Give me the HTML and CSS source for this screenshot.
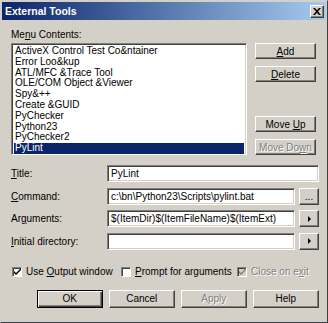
FILE: index.html
```html
<!DOCTYPE html>
<html lang="en">
<head>
    <meta charset="UTF-8">
    <title>External Tools</title>
    <link rel="stylesheet" href="styles.css">
</head>
<body>
    <div class="window">
        <div class="titlebar">
            <span class="title">External Tools</span>
            <span class="close-btn">
                <svg width="8" height="7" viewBox="0 0 8 7"><path d="M0 0h2l2 2.2L6 0h2L5 3.5 8 7H6L4 4.8 2 7H0l3-3.5z" fill="#000"/></svg>
            </span>
        </div>
        <div class="content">
            <div class="label">Me<u>n</u>u Contents:</div>
            <div class="top">
                <ul class="list">
                    <li>ActiveX Control Test Co&amp;ntainer</li>
                    <li>Error Loo&amp;kup</li>
                    <li>ATL/MFC &amp;Trace Tool</li>
                    <li>OLE/COM Object &amp;Viewer</li>
                    <li>Spy&amp;++</li>
                    <li>Create &amp;GUID</li>
                    <li>PyChecker</li>
                    <li>Python23</li>
                    <li>PyChecker2</li>
                    <li class="selected">PyLint</li>
                </ul>
                <div class="side">
                    <div class="group">
                        <button class="btn"><span><u>A</u>dd</span></button>
                        <button class="btn"><span><u>D</u>elete</span></button>
                    </div>
                    <div class="group">
                        <button class="btn"><span>Move <u>U</u>p</span></button>
                        <button class="btn disabled"><span>Move Do<u>w</u>n</span></button>
                    </div>
                </div>
            </div>
            <div class="form">
                <div class="row">
                    <span class="field-label"><u>T</u>itle:</span>
                    <div class="textbox">PyLint</div>
                </div>
                <div class="row">
                    <span class="field-label"><u>C</u>ommand:</span>
                    <div class="textbox">c:\bn\Python23\Scripts\pylint.bat</div>
                    <button class="btn small dots"><span>...</span></button>
                </div>
                <div class="row">
                    <span class="field-label">Ar<u>g</u>uments:</span>
                    <div class="textbox">$(ItemDir)$(ItemFileName)$(ItemExt)</div>
                    <button class="btn small"><span class="arrow"></span></button>
                </div>
                <div class="row">
                    <span class="field-label"><u>I</u>nitial directory:</span>
                    <div class="textbox"></div>
                    <button class="btn small"><span class="arrow"></span></button>
                </div>
            </div>
            <div class="checks">
                <label class="check c1">
                    <span class="box">
                        <svg width="7" height="7" viewBox="0 0 7 7"><path d="M0 3l2 2 5-5v2L2 7 0 5z" fill="#000"/></svg>
                    </span>
                    <span>Use <u>O</u>utput window</span>
                </label>
                <label class="check c2">
                    <span class="box"></span>
                    <span><u>P</u>rompt for arguments</span>
                </label>
                <label class="check c3 disabled">
                    <span class="box">
                        <svg width="7" height="7" viewBox="0 0 7 7"><path d="M0 3l2 2 5-5v2L2 7 0 5z" fill="#808080"/></svg>
                    </span>
                    <span>Close on e<u>x</u>it</span>
                </label>
            </div>
            <div class="buttons">
                <button class="btn wide default"><span>OK</span></button>
                <button class="btn wide"><span>Cancel</span></button>
                <button class="btn wide disabled"><span>Apply</span></button>
                <button class="btn wide"><span>Help</span></button>
            </div>
        </div>
    </div>
</body>
</html>
```
FILE: styles.css
```css
body {
    margin: 0;
    background-color: #d4d0c8;
    font-family: "Liberation Sans", Arial, sans-serif;
    font-size: 10px;
    color: #000;
}
u {
    text-decoration: underline;
    text-underline-offset: 1px;
}
.window {
    width: 328px;
    height: 323px;
    box-sizing: border-box;
    border: 1px solid;
    border-color: #d4d0c8 #404040 #404040 #d4d0c8;
    background-color: #d4d0c8;
}
.titlebar {
    height: 18px;
    margin: 1px 1px 0 1px;
    display: flex;
    align-items: center;
    justify-content: space-between;
    padding: 0 2px 0 3px;
    background: linear-gradient(to right, #0a246a, #a6caf0);
    color: white;
}
.title {
    font-weight: bold;
    font-size: 10.5px;
}
.close-btn {
    width: 14px;
    height: 13px;
    box-sizing: border-box;
    display: flex;
    align-items: center;
    justify-content: center;
    background: #d4d0c8;
    border: 1px solid;
    border-color: #fff #404040 #404040 #fff;
    box-shadow: inset -1px -1px 0 #808080;
}
.content {
    padding: 8px 8px 0 10px;
}
.label {
    height: 13px;
    line-height: 13px;
    margin-bottom: 2px;
}
.top {
    display: flex;
    gap: 8px;
}
.list {
    list-style: none;
    margin: 0;
    width: 236px;
    height: 112px;
    box-sizing: border-box;
    border: 1px solid;
    border-color: #808080 #fff #fff #808080;
    box-shadow: inset 1px 1px 0 #404040, inset -1px -1px 0 #d4d0c8;
    background: white;
    padding: 2px 2px 1px;
}
.list li {
    height: 10.8px;
    line-height: 10.8px;
    padding-left: 1px;
    white-space: nowrap;
}
.list li.selected {
    background: #0a246a;
    color: white;
}
.side {
    width: 61px;
    display: flex;
    flex-direction: column;
    justify-content: space-between;
}
.group {
    display: flex;
    flex-direction: column;
    gap: 7px;
}
.btn {
    height: 16px;
    box-sizing: border-box;
    padding: 0;
    margin: 0;
    font: inherit;
    color: #000;
    background: #d4d0c8;
    border: 1px solid;
    border-color: #fff #404040 #404040 #fff;
    box-shadow: inset -1px -1px 0 #808080;
    display: flex;
    align-items: center;
    justify-content: center;
    white-space: nowrap;
}
.btn.disabled {
    color: #808080;
    text-shadow: 1px 1px 0 #fff;
}
.form {
    margin-top: 10px;
    display: flex;
    flex-direction: column;
    gap: 5.6px;
}
.row {
    display: flex;
    align-items: center;
    height: 17px;
    gap: 4px;
}
.field-label {
    width: 92px;
}
.textbox {
    flex: 1;
    height: 17px;
    box-sizing: border-box;
    border: 1px solid;
    border-color: #808080 #fff #fff #808080;
    box-shadow: inset 1px 1px 0 #404040, inset -1px -1px 0 #d4d0c8;
    background: white;
    padding: 0 3px;
    line-height: 15px;
    white-space: nowrap;
    overflow: hidden;
}
.btn.small {
    width: 20px;
    height: 17px;
}
.dots {
    align-items: flex-end;
    padding-bottom: 3px;
    line-height: 8px;
}
.arrow {
    width: 0;
    height: 0;
    border-top: 3px solid transparent;
    border-bottom: 3px solid transparent;
    border-left: 3px solid #000;
    margin-left: 1px;
}
.checks {
    margin-top: 16px;
    height: 12px;
    display: flex;
    align-items: center;
}
.check {
    display: flex;
    align-items: center;
    gap: 4px;
    white-space: nowrap;
}
.c1 {
    margin-left: 1px;
    width: 109px;
}
.c2 {
    width: 116px;
}
.check.disabled {
    color: #808080;
    text-shadow: 1px 1px 0 #fff;
}
.box {
    width: 10px;
    height: 10px;
    box-sizing: border-box;
    border: 1px solid;
    border-color: #808080 #fff #fff #808080;
    box-shadow: inset 1px 1px 0 #404040;
    background: white;
    display: flex;
    align-items: center;
    justify-content: center;
}
.check.disabled .box {
    background: #d4d0c8;
}
.buttons {
    margin-top: 12px;
    display: flex;
    justify-content: flex-end;
    gap: 5.5px;
}
.btn.wide {
    width: 66.5px;
    height: 18px;
}
.btn.default {
    border: 1px solid #000;
    box-shadow: inset 1px 1px 0 #fff, inset -1px -1px 0 #404040, inset -2px -2px 0 #808080;
}
```
